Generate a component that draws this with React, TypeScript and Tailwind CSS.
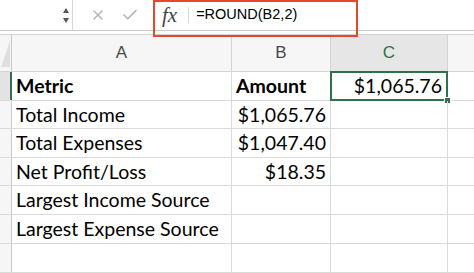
import { X, Check } from "lucide-react";

const cols = [
  { key: "A", w: "w-[220px]" },
  { key: "B", w: "w-[99px]" },
  { key: "C", w: "w-[117px]" },
];

const rows = [
  { a: "Metric", b: "Amount", c: "$1,065.76", bold: true, h: "h-[29px]" },
  { a: "Total Income", b: "$1,065.76", c: "", h: "h-[28px]" },
  { a: "Total Expenses", b: "$1,047.40", c: "", h: "h-[29px]" },
  { a: "Net Profit/Loss", b: "$18.35", c: "", h: "h-[28px]" },
  { a: "Largest Income Source", b: "", c: "", h: "h-[29px]" },
  { a: "Largest Expense Source", b: "", c: "", h: "h-[29px]" },
  { a: "", b: "", c: "", h: "h-[29px]" },
];

export default function App() {
  return (
    <div className="relative w-[474px] h-[273px] overflow-hidden bg-white">
      {/* Formula bar */}
      <div className="flex h-[31px] items-center border-b border-[#c9c9c9]">
        <div className="flex h-full w-[73px] items-center justify-end border-r border-[#d6d6d6] pr-[3px]">
          <div className="flex flex-col items-center gap-[5px]">
            <div className="h-0 w-0 border-x-[3.5px] border-b-[5px] border-x-transparent border-b-[#555]" />
            <div className="h-0 w-0 border-x-[3.5px] border-t-[5px] border-x-transparent border-t-[#555]" />
          </div>
        </div>
        <div className="flex w-[80px] items-center gap-[15px] pl-[17px]">
          <X className="h-[16px] w-[16px] text-[#b5b5b5]" strokeWidth={2.2} />
          <Check className="h-[18px] w-[18px] text-[#b5b5b5]" strokeWidth={2.2} />
        </div>
        <div className="flex items-center pl-[9px]">
          <span className="font-['Liberation_Serif',serif] text-[21px] italic text-[#444] leading-none">fx</span>
          <div className="ml-[11px] h-[16px] border-l border-[#d8d8d8]" />
          <span className="ml-[7px] font-['Liberation_Sans',Arial,sans-serif] text-[14.5px] text-black">
            =ROUND(B2,2)
          </span>
        </div>
      </div>

      {/* Column headers */}
      <div className="mt-[3px] flex h-[38px] border-y border-[#d4d4d4] bg-[#f6f6f6] font-['Liberation_Sans',Arial,sans-serif] text-[17px] text-[#4a4a4a]">
        <div className="relative w-[12px] border-r border-[#c9c9c9]">
          <div className="absolute bottom-[4px] right-[1px] h-0 w-0 border-b-[26px] border-l-[9px] border-b-[#dedede] border-l-transparent" />
        </div>
        {cols.map((c) => (
          <div
            key={c.key}
            className={`${c.w} flex items-center justify-center border-r border-[#d4d4d4] ${
              c.key === "C" ? "bg-[#e6e6e6] text-[#2f7148]" : ""
            }`}
          >
            {c.key}
          </div>
        ))}
        <div className="flex-1" />
      </div>

      {/* Rows */}
      <div className="font-['Lato','Noto_Sans',sans-serif] text-[19.5px] text-black">
        {rows.map((r, i) => (
          <div key={i} className={`flex ${r.h} border-b border-[#dadada]`}>
            <div
              className={`w-[12px] ${
                i === 0 ? "bg-[#e3e3e3] border-r-2 border-[#2f7148]" : "bg-[#f6f6f6] border-r border-[#c9c9c9]"
              }`}
            />
            <div className={`w-[220px] flex items-center border-r border-[#dadada] pl-[4px] ${r.bold ? "font-bold" : ""}`}>
              {r.a}
            </div>
            <div
              className={`w-[99px] flex items-center border-r border-[#dadada] px-[4px] ${
                r.bold ? "font-bold justify-start" : "justify-end"
              }`}
            >
              {r.b}
            </div>
            <div className="relative w-[117px] flex items-center justify-end border-r border-[#dadada] pr-[5px]">
              {r.c}
              {i === 0 && (
                <>
                  <div className="absolute -left-[1px] -top-[1px] -right-[1px] -bottom-[1px] border-2 border-[#2f7148]" />
                  <div className="absolute -bottom-[4px] -right-[4px] h-[7px] w-[7px] border border-white bg-[#2f7148]" />
                </>
              )}
            </div>
            <div className="flex-1" />
          </div>
        ))}
      </div>

      {/* Annotation box around formula */}
      <div className="absolute left-[153px] top-0 h-[37px] w-[205px] border-2 border-[#e5472f]" />
    </div>
  );
}
